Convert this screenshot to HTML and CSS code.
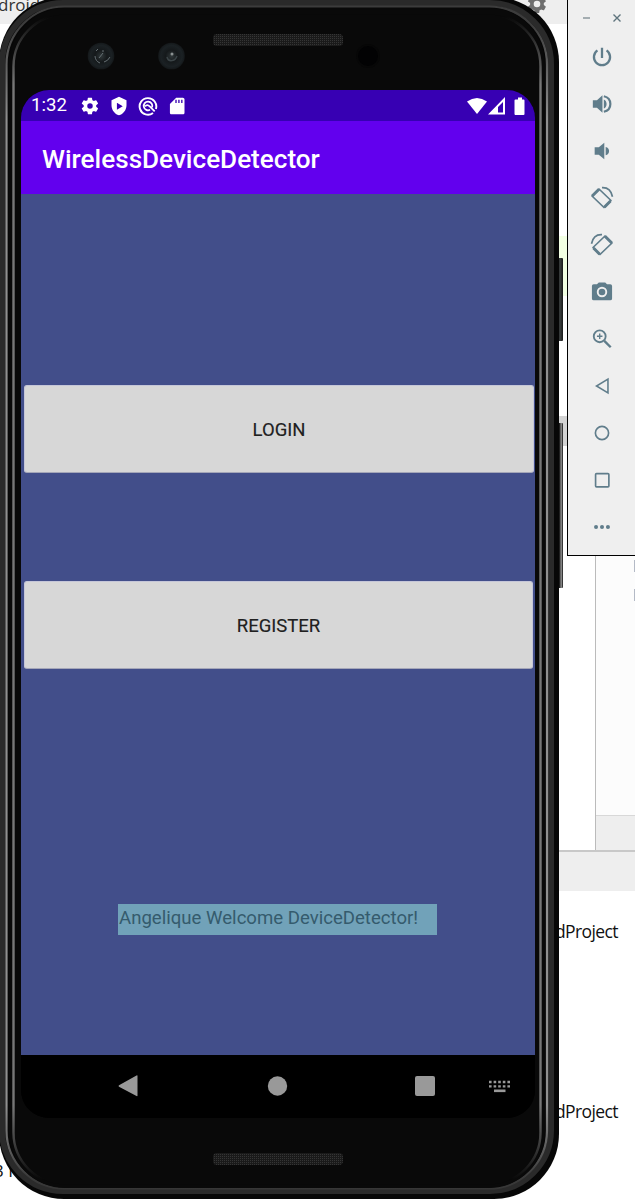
FILE: index.html
```html
<!DOCTYPE html>
<html lang="en">
<head>
<meta charset="utf-8">
<title>WirelessDeviceDetector</title>
<link rel="stylesheet" href="styles.css">
</head>
<body>
<div class="ide">
  <div class="ide-top"><span class="tab-label">droid</span>
    <svg class="ide-gear" viewBox="0 0 24 24"><path fill="#6e6e6e" fill-rule="evenodd" d="M19.4 13a7.500 7.500 0 0 0 0-2l2.100-1.600a.5.5 0 0 0 .1-.6l-2-3.500a.5.5 0 0 0-.6-.2l-2.500 1a7 7 0 0 0-1.700-1l-.4-2.600a.5.5 0 0 0-.5-.4h-4a.5.5 0 0 0-.5.4L9 5.100a7 7 0 0 0-1.700 1l-2.500-1a.5.5 0 0 0-.6.2l-2 3.500a.5.5 0 0 0 .1.6L4.500 11a8 8 0 0 0 0 2l-2.200 1.600a.5.5 0 0 0-.1.6l2 3.500c.1.200.4.300.6.200l2.500-1a7 7 0 0 0 1.700 1l.4 2.600c0 .2.200.4.500.4h4c.3 0 .5-.2.500-.4l.4-2.600a7 7 0 0 0 1.700-1l2.500 1c.2.100.5 0 .6-.2l2-3.500a.5.5 0 0 0-.1-.6zM12 15.600a3.600 3.600 0 1 1 0-7.200 3.600 3.600 0 0 1 0 7.200z"/></svg>
  </div>
  <div class="ide-editor">
    <div class="gutter"><i class="mark-green"></i><i class="mark-gray"></i></div>
    <div class="side"><div class="side-body"><i></i><i></i></div><div class="side-foot"></div></div>
  </div>
  <div class="ide-bar"></div>
  <div class="ide-log">
    <p class="log-name">dProject</p>
    <p class="log-name second">dProject</p>
    <p class="log-left">3 I</p>
  </div>
</div>

<div class="phone">
  <svg class="bezel" viewBox="0 0 567 1201">
    <defs>
      <linearGradient id="rim" x1="0" y1="0" x2="0" y2="1201" gradientUnits="userSpaceOnUse">
        <stop offset="0" stop-color="#3c3c3c"/><stop offset=".02" stop-color="#3c3c3c"/><stop offset=".1" stop-color="#909090"/><stop offset=".92" stop-color="#909090"/><stop offset=".98" stop-color="#3a3a3a"/><stop offset="1" stop-color="#333"/>
      </linearGradient>
      <linearGradient id="inner" x1="0" y1="0" x2="0" y2="1201" gradientUnits="userSpaceOnUse">
        <stop offset="0.014" stop-color="#777" stop-opacity="0"/><stop offset=".07" stop-color="#777"/><stop offset=".92" stop-color="#777"/><stop offset=".982" stop-color="#777" stop-opacity="0"/>
      </linearGradient>
      <linearGradient id="key"><stop offset="0" stop-color="#111"/><stop offset=".5" stop-color="#3c4040"/><stop offset="1" stop-color="#191919"/></linearGradient>
      <linearGradient id="key2"><stop offset="0" stop-color="#080808"/><stop offset=".45" stop-color="#222"/><stop offset=".7" stop-color="#999"/><stop offset="1" stop-color="#111"/></linearGradient>
      <radialGradient id="lens"><stop offset="0" stop-color="#30383a"/><stop offset=".45" stop-color="#15191b"/><stop offset=".8" stop-color="#1b2124"/><stop offset="1" stop-color="#14181a"/></radialGradient>
      <pattern id="mesh" width="2" height="2" patternUnits="userSpaceOnUse"><rect width="2" height="2" fill="#1a1a1a"/><path d="M0 0h1v1H0z" fill="#353535"/></pattern>
    </defs>
    <rect x="557" y="258" width="6" height="83" rx="1" fill="url(#key)"/>
    <rect x="557" y="423" width="6" height="165" rx="1" fill="url(#key2)"/>
    <rect x="-1" y="-3" width="560" height="1202" rx="65" fill="#070707"/>
    <rect x="2" y="3" width="549" height="1188" rx="61" fill="none" stroke="#2a2a2a" stroke-width="6"/>
    <rect x="6.500" y="6.500" width="540.500" height="1182" rx="58" fill="none" stroke="url(#rim)" stroke-width="2.200"/>
    <rect x="9" y="8" width="536" height="1180" rx="56" fill="#090909"/>
    <rect x="13.500" y="14.500" width="527" height="1170" rx="52" fill="#090909" stroke="url(#inner)" stroke-width="2.400"/>
    <rect x="213" y="34" width="130" height="12" rx="4" fill="url(#mesh)"/>
    <rect x="213" y="1153" width="130" height="12" rx="4" fill="url(#mesh)"/>
    <circle cx="101" cy="56" r="13.300" fill="url(#lens)"/><circle cx="171.500" cy="56" r="13.300" fill="url(#lens)"/>
    <path d="M95 56c0 3 2 6 5 7M104 62q4-1 6-5M99 58l4-5M96 51l2-2M102 51h2" stroke="#667074" fill="none"/>
    <path d="M167 57c1 5 8 5 10-1" stroke="#3b4447" stroke-width="1.500" fill="none"/><circle cx="172" cy="54" r="1.500" fill="#8b9292"/>
    <circle cx="368" cy="56" r="12" fill="#070707"/><circle cx="368" cy="56" r="10" fill="#020203"/>
  </svg>
  <main class="screen">
    <header class="status">
      <span class="clock">1:32</span>
      <svg viewBox="0 0 24 24"><path fill="#fff" fill-rule="evenodd" d="M19.4 13a7.500 7.500 0 0 0 0-2l2.100-1.600a.5.5 0 0 0 .1-.6l-2-3.500a.5.5 0 0 0-.6-.2l-2.500 1a7 7 0 0 0-1.700-1l-.4-2.600a.5.5 0 0 0-.5-.4h-4a.5.5 0 0 0-.5.4L9 5.100a7 7 0 0 0-1.700 1l-2.500-1a.5.5 0 0 0-.6.2l-2 3.500a.5.5 0 0 0 .1.6L4.500 11a8 8 0 0 0 0 2l-2.200 1.600a.5.5 0 0 0-.1.6l2 3.500c.1.200.4.300.6.200l2.500-1a7 7 0 0 0 1.700 1l.4 2.600c0 .2.200.4.500.4h4c.3 0 .5-.2.500-.4l.4-2.600a7 7 0 0 0 1.700-1l2.500 1c.2.100.5 0 .6-.2l2-3.500a.5.5 0 0 0-.1-.6zM12 15.300a3.300 3.300 0 1 1 0-6.600 3.300 3.300 0 0 1 0 6.600z"/></svg>
      <svg viewBox="0 0 24 24"><path fill="#fff" fill-rule="evenodd" d="M12 1 3 5v6c0 5.500 3.800 10.700 9 12 5.200-1.300 9-6.500 9-12V5zM9.500 8l7 4.200-7 4.200z"/></svg>
      <svg viewBox="0 0 24 24" fill="none" stroke="#fff"><path stroke-width="2.300" d="M18 20.500A10 10 0 1 1 21.500 15.500"/><path stroke-width="2.100" d="M14.500 16.500A5.200 5.200 0 1 1 17 13.500M8.500 12.500q2.500-3 5.500 0l6 6"/></svg>
      <svg viewBox="0 0 24 24"><path fill="#fff" fill-rule="evenodd" d="M19 2h-8L3.500 9.500V20c0 1.100.9 2 2 2H19c1.100 0 2-.9 2-2V4c0-1.100-.9-2-2-2zM10 4.500h1.600v4H10zm3.500 0h1.600v4h-1.600zm3.500 0h1.600v4H17z"/></svg>
      <span class="spring"></span>
      <svg class="net" viewBox="0 0 60 20"><path fill="#fff" d="M0 4.500Q10-2.500 20 4.500L10 17z"/><path fill="#fff" fill-rule="evenodd" d="M38 0v17.500H21zM36 5v10.500h-5V10z"/><path fill="#fff" d="M49.500 2.500h1.500V.5h4v2h1.500q1 0 1 1V17q0 1-1 1h-8q-1 0-1-1V3.500q0-1 1-1z"/></svg>
    </header>
    <h1 class="appbar">WirelessDeviceDetector</h1>
    <section class="content">
      <button class="btn login">LOGIN</button>
      <button class="btn register">REGISTER</button>
      <p class="welcome">Angelique Welcome DeviceDetector!</p>
    </section>
    <nav class="nav">
      <svg viewBox="0 0 514 63" fill="#999"><path d="M115.500 20.500q1-.6 1 .5v19.500q0 1-1 .5L98 31.700q-1-.7 0-1.400z"/><circle cx="256.500" cy="31" r="9.700"/><rect x="394" y="21" width="20" height="20" rx="2"/><path d="M468 27H489M468 31.300H489" stroke="#999" stroke-width="2.300" stroke-dasharray="2.600 2"/><rect x="473" y="34.500" width="11.500" height="2.600"/></svg>
    </nav>
  </main>
</div>

<aside class="tools">
  <div class="win"><svg viewBox="0 0 12 12"><path d="M2 6h7" stroke="#8b979c" stroke-width="1.500"/></svg><svg viewBox="0 0 12 12"><path d="m2.500 2.500 7 7m0-7-7 7" stroke="#5f747d" stroke-width="1.400"/></svg></div>
  <svg viewBox="0 0 24 24"><path fill="none" stroke="#607d8b" stroke-width="2.500" d="M12 2v11M7 4.800a8.800 8.800 0 1 0 10 0"/></svg>
  <svg viewBox="0 0 24 24"><path fill="#607d8b" d="M2 8h4.500L12.500 2.500v19L6.500 16H2zM14 7c4 1.500 4 8.500 0 10z"/><path fill="none" stroke="#607d8b" stroke-width="2.400" d="M14 3.500c9.500 2 9.500 15 0 17"/></svg>
  <svg viewBox="0 0 24 24"><path fill="#607d8b" d="M4 8h4.500L14.500 3v18l-6-5H4zM16 7.500c5 1 5 8 0 9z"/></svg>
  <svg class="rot" viewBox="0 0 24 24" fill="none" stroke="#607d8b"><path stroke-width="1.700" stroke-linejoin="round" d="m9 3 12 11.500-7 7L2 10z"/><path stroke-width="3" d="M9 3.200 2.200 10M20.500 15l-6.200 6.200"/><path stroke-width="1.700" d="M12 1.700q8.500-.5 10.500 9"/></svg>
  <svg class="rot" viewBox="0 0 24 24" fill="none" stroke="#607d8b"><path stroke-width="1.700" stroke-linejoin="round" d="M15 3 3 14.500l7 7L22 10z"/><path stroke-width="3" d="m15 3.200 6.800 6.800M3.500 15l6.200 6.200"/><path stroke-width="1.700" d="M12 1.700q-8.500-.5-10.500 9"/></svg>
  <svg viewBox="0 0 24 24"><path fill="#607d8b" fill-rule="evenodd" d="m8.500 1.500-2 2H3a2 2 0 0 0-2 2V19a2 2 0 0 0 2 2h18a2 2 0 0 0 2-2V5.500a2 2 0 0 0-2-2h-3.500l-2-2zM12 6.300a5.700 5.700 0 1 1 0 11.400 5.700 5.700 0 0 1 0-11.400z"/><circle cx="12" cy="12" r="3.600" fill="#607d8b"/></svg>
  <svg viewBox="0 0 24 24" fill="none" stroke="#607d8b"><circle cx="9.500" cy="9" r="6.500" stroke-width="2"/><path stroke-width="2.600" d="m14.500 14 7 7"/><path stroke-width="1.500" d="M6.500 9h6M9.500 6v6"/></svg>
  <svg viewBox="0 0 24 24"><path fill="none" stroke="#607d8b" stroke-width="1.700" d="M18.500 4.500v15L6 12z"/></svg>
  <svg viewBox="0 0 24 24"><circle cx="12" cy="12" r="7.200" fill="none" stroke="#607d8b" stroke-width="1.800"/></svg>
  <svg viewBox="0 0 24 24"><rect x="5" y="5" width="14.500" height="14.500" rx="1" fill="none" stroke="#607d8b" stroke-width="1.800"/></svg>
  <svg viewBox="0 0 24 24" fill="#607d8b"><circle cx="5.500" cy="12" r="2.200"/><circle cx="12" cy="12" r="2.200"/><circle cx="18.500" cy="12" r="2.200"/></svg>
</aside>
</body>
</html>
```

FILE: styles.css
```css
* { box-sizing: border-box; margin: 0; padding: 0; }
body { position: relative; width: 635px; height: 1201px; overflow: hidden; background: #fff; font-family: Roboto, sans-serif; }
svg { display: block; flex: none; }

/* Editor window behind the emulator */
.ide { display: flex; flex-direction: column; height: 1201px; font-family: "Open Sans", sans-serif; color: #111; }
.ide-top { height: 24px; background: #eee; display: flex; justify-content: space-between; padding-right: 87px; }
.tab-label { font-size: 17px; line-height: 24px; margin-top: -7px; color: #333; margin-left: -2px; }
.ide-gear { width: 22px; height: 22px; margin-top: -7px; }
.ide-editor { height: 826px; display: flex; justify-content: flex-end; }
.gutter { width: 36px; padding-top: 212px; }
.gutter i { display: block; }
.mark-green { height: 60px; background: #f2ffe3; }
.mark-gray { height: 30px; margin-top: 120px; background: #d3d3d3; }
.side { width: 40px; border-left: 1px solid #bbb; display: flex; flex-direction: column; }
.side-body { flex: 1; background: #fcfcfc; display: flex; flex-direction: column; align-items: flex-end; gap: 17px; padding-top: 536px; }
.side-body i { width: 1px; height: 12px; background: #b4bac6; }
.side-foot { height: 35px; background: #eee; border-top: 1px solid #d8d8d8; }
.ide-bar { height: 41px; background: #eee; border-top: 2px solid #c8c8c8; }
.ide-log { flex: 1; }
.log-name { font-size: 17.500px; line-height: 24px; letter-spacing: -.6px; text-align: right; padding: 28px 17px 0 0; }
.log-name.second { padding-top: 156px; }
.log-left { font-size: 17px; line-height: 24px; margin: 36px 0 0 -6px; }

/* Emulated phone */
.phone { position: absolute; left: 0; top: 0; width: 567px; height: 1201px; padding: 90px 32px 83px 21px; }
.bezel { position: absolute; left: 0; top: 0; width: 567px; height: 1201px; }
.screen { position: relative; width: 514px; height: 1028px; border-radius: 28px; overflow: hidden; background: #000; }
.status { height: 31px; background: #3700b3; color: #fff; display: flex; align-items: center; padding: 0 10px; }
.status svg { width: 20px; height: 20px; margin-right: 9px; }
.clock { width: 49px; font-size: 18.600px; line-height: 31px; }
.spring { flex: 1; }
.status svg.net { width: 60px; height: 20px; margin: 2px -2px 0 0; }
.appbar { height: 73px; background: #6200ee; color: #fff; font-weight: 500; font-size: 26.100px; line-height: 76px; padding-left: 21px; }
.content { height: 861px; background: #424e8a; display: flex; flex-direction: column; padding: 191px 2px 0 3px; }
.btn { display: block; width: 509px; height: 88px; border: 1px solid #c5c6d8; border-bottom-color: #a4a6b8; border-radius: 3px; background: #d7d7d7; color: #202020; font: 400 18.500px/88px Roboto, sans-serif; -webkit-text-stroke: .15px #202020; }
.login { width: 510px; }
.register { margin-top: 108px; }
.welcome { width: 319px; height: 31px; margin: 235px 0 0 94px; padding-left: 1px; background: #71a2b9; color: #355b6d; font-size: 18.600px; line-height: 29px; white-space: nowrap; }
.nav { height: 63px; background: #000; }
.nav svg { width: 514px; height: 63px; }

/* Emulator controls */
.tools { position: absolute; left: 567px; top: 0; width: 68px; height: 556px; background: #efefef; border: solid #000; border-width: 0 0 1px 1px; display: flex; flex-direction: column; align-items: center; gap: 25px; }
.tools > svg { width: 22px; height: 22px; }
.tools > svg.rot { width: 24px; height: 24px; margin: -1px 0; }
.win { width: 68px; height: 21px; display: flex; gap: 18px; padding: 12px 0 0 13px; }
.win svg { width: 12px; height: 12px; }
```
